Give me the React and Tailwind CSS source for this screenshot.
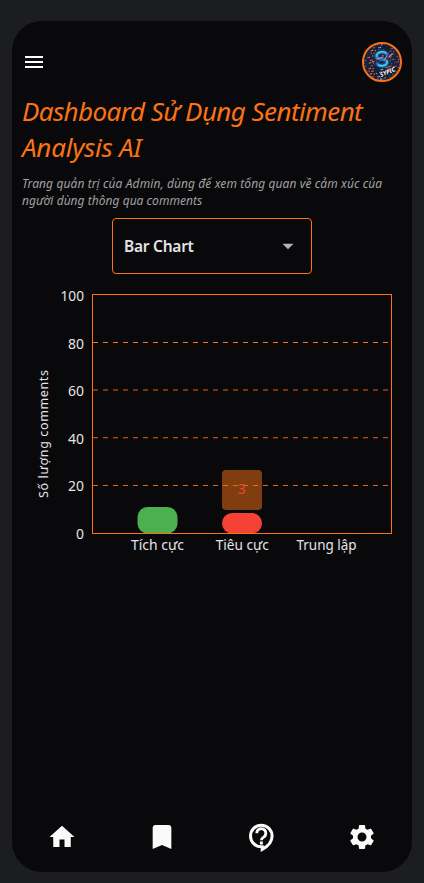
import React from "react";
import { MdMenu, MdArrowDropDown, MdHome, MdBookmark, MdSettings } from "react-icons/md";

const palette = ["#45718c", "#b45163", "#182849", "#7b5679", "#10162a", "#a8a2b3", "#141c35", "#c9775f", "#1a2138"];
const dots = Array.from({ length: 380 }, (_, i) => ({
  x: (i * 17.3) % 40,
  y: (i * 29.7 + Math.floor(i / 7) * 3.1) % 40,
  c: palette[(i * 5 + Math.floor(i / 9)) % 9],
}));

function Avatar() {
  return (
    <div className="h-10 w-10 overflow-hidden rounded-full border-2 border-[#f97316] bg-[#1b2138]">
      <svg viewBox="2 2 36 36" className="h-full w-full">
        {dots.map((d, i) => (
          <rect key={i} x={d.x} y={d.y} width="1.2" height="1.2" fill={d.c} />
        ))}
        <g fill="none" strokeLinecap="round">
          <path d="M25 12C21 8 13 11 14.500 15c1.500 3.500 11.500 1 10.500 6-1 4-7.500 3.500-9.500 1" stroke="#14325c" strokeWidth="5.500" />
          <path d="M25 12C21 8 13 11 14.500 15c1.500 3.500 11.500 1 10.500 6-1 4-7.500 3.500-9.500 1" stroke="#2576b0" strokeWidth="3.200" />
          <path d="M24 11C20 8 13.500 11 15 14.500M25 19c1 4-5 6-8.500 4" stroke="#45d0e6" strokeWidth="1.500" />
          <path d="M15 17l6-2m1 3 3-4m5-2-3 3" stroke="#d584ad" strokeWidth="1.200" />
          <path d="M24 26l5-2m2 1 3-1" stroke="#b9563b" strokeWidth="1.300" />
        </g>
        <path d="M17 32l17-7 1 4-16 7z" fill="#111827" />
        <text x="19" y="35" fill="#fff" fontSize="6" fontWeight="700" fontStyle="italic" fontFamily="Noto Sans, sans-serif" textLength="16" lengthAdjust="spacingAndGlyphs" transform="rotate(-22 19 35)">SYPIC</text>
      </svg>
    </div>
  );
}

function HelpIcon() {
  return (
    <svg viewBox="0 0 36 36" className="h-9 w-9" fill="none" stroke="currentColor">
      <path d="M18.200 27.800H17.300A10.800 10.800 0 1 1 28.100 17C28.100 22.500 24 27.300 18.200 30.400Z" strokeWidth="3" />
      <path d="M12.800 14.200a4.500 4.500 0 1 1 6.800 3.900c-1.700 1-2.200 1.500-2.200 3.200" strokeWidth="2.800" />
      <path d="M15.900 22.500h3v2.900h-3z" fill="currentColor" stroke="none" />
    </svg>
  );
}

const ticks = [
  { v: "100", y: 301.2, x: 60.5, w: 23.5 },
  { v: "80", y: 349, x: 68, w: 16 },
  { v: "60", y: 396.3, x: 68, w: 16 },
  { v: "40", y: 444, x: 68, w: 16 },
  { v: "20", y: 491.3, x: 68, w: 16 },
  { v: "0", y: 539, x: 76, w: 8 },
];

const categories = [
  { name: "Tích cực", x: 131, w: 53 },
  { name: "Tiêu cực", x: 215.7, w: 53 },
  { name: "Trung lập", x: 296.5, w: 60 },
];

const gridLines = [
  { y: 342.5, o: 1 },
  { y: 390, o: 0.9 },
  { y: 437.8, o: 0.9 },
  { y: 485.5, o: 0.9 },
];

function Chart() {
  return (
    <svg viewBox="12 274 400 290" className="block h-[290px] w-[400px]" fontFamily="Noto Sans, sans-serif">
      {ticks.map((t) => (
        <text key={t.v} x={t.x} y={t.y} textLength={t.w} lengthAdjust="spacingAndGlyphs" fontSize="14" fill="#e4e4e6">{t.v}</text>
      ))}
      <text transform="translate(48 498) rotate(-90)" textLength="128" fontSize="12.500" fill="#e4e4e6">Số lượng comments</text>
      <rect x="137.500" y="507" width="40" height="26.500" rx="10" fill="#4caf50" />
      <rect x="222" y="513" width="40" height="20.500" rx="10" fill="#f44336" />
      <rect x="222" y="470" width="40" height="40" rx="4" fill="#803e10" />
      {gridLines.map((g) => (
        <path key={g.y} d={`M93 ${g.y}H391`} stroke="#f97316" strokeWidth="1.100" strokeDasharray="5 5" opacity={g.o} />
      ))}
      <rect x="92.500" y="294.500" width="299" height="239" fill="none" stroke="#f97316" />
      <text x="238" y="494" fontSize="14" fill="#f44336" textLength="7.500" lengthAdjust="spacingAndGlyphs">3</text>
      {categories.map((c) => (
        <text key={c.name} x={c.x} y="550" fontSize="14" fill="#e4e4e6" textLength={c.w} lengthAdjust="spacingAndGlyphs">{c.name}</text>
      ))}
    </svg>
  );
}

export default function App() {
  return (
    <div className="h-[883px] w-[424px] overflow-hidden bg-[#1c1d1f] px-3 pt-[21px] font-['Noto_Sans',sans-serif]">
      <div className="flex h-[851px] w-[400px] flex-col overflow-hidden rounded-[30px] bg-[#09090b]">
        <header className="flex h-[72px] shrink-0 items-start justify-between pt-[21px] pr-[10px] pl-[10px]">
          <MdMenu className="mt-2 h-6 w-6 text-white" />
          <Avatar />
        </header>
        <h1 className="h-[72px] shrink-0 pl-[10px] text-[26px] leading-9 whitespace-nowrap text-[#f97316] italic">
          <span className="block tracking-[-0.58px]">Dashboard Sử Dụng Sentiment</span>
          <span className="block tracking-[-0.25px]">Analysis AI</span>
        </h1>
        <p className="mt-[10px] h-[34px] shrink-0 pl-[10px] text-[12px] leading-[17px] whitespace-nowrap text-[#a1a1a1] italic">
          <span className="block tracking-[0.1px]">Trang quản trị của Admin, dùng để xem tổng quan về cảm xúc của</span>
          <span className="block tracking-[0.035px]">người dùng thông qua comments</span>
        </p>
        <button className="mt-[9px] ml-[100px] flex h-14 w-[200px] shrink-0 items-center justify-between rounded-[4px] border border-[#f97316] pr-[10px] pl-[11px] text-[15.5px] font-semibold tracking-[-0.25px] text-[#e4e4e6]">
          <span className="pt-px">Bar Chart</span>
          <MdArrowDropDown className="mb-px h-[26px] w-[26px] text-[#b5b5b6]" />
        </button>
        <div className="shrink-0"><Chart /></div>
        <nav className="mt-auto grid h-[69px] shrink-0 grid-cols-4 items-center justify-items-center pb-[2px] text-[#fafafa]">
          <MdHome className="h-[30px] w-[30px]" />
          <MdBookmark className="h-8 w-8" />
          <HelpIcon />
          <MdSettings className="h-[30px] w-[30px]" />
        </nav>
      </div>
    </div>
  );
}
